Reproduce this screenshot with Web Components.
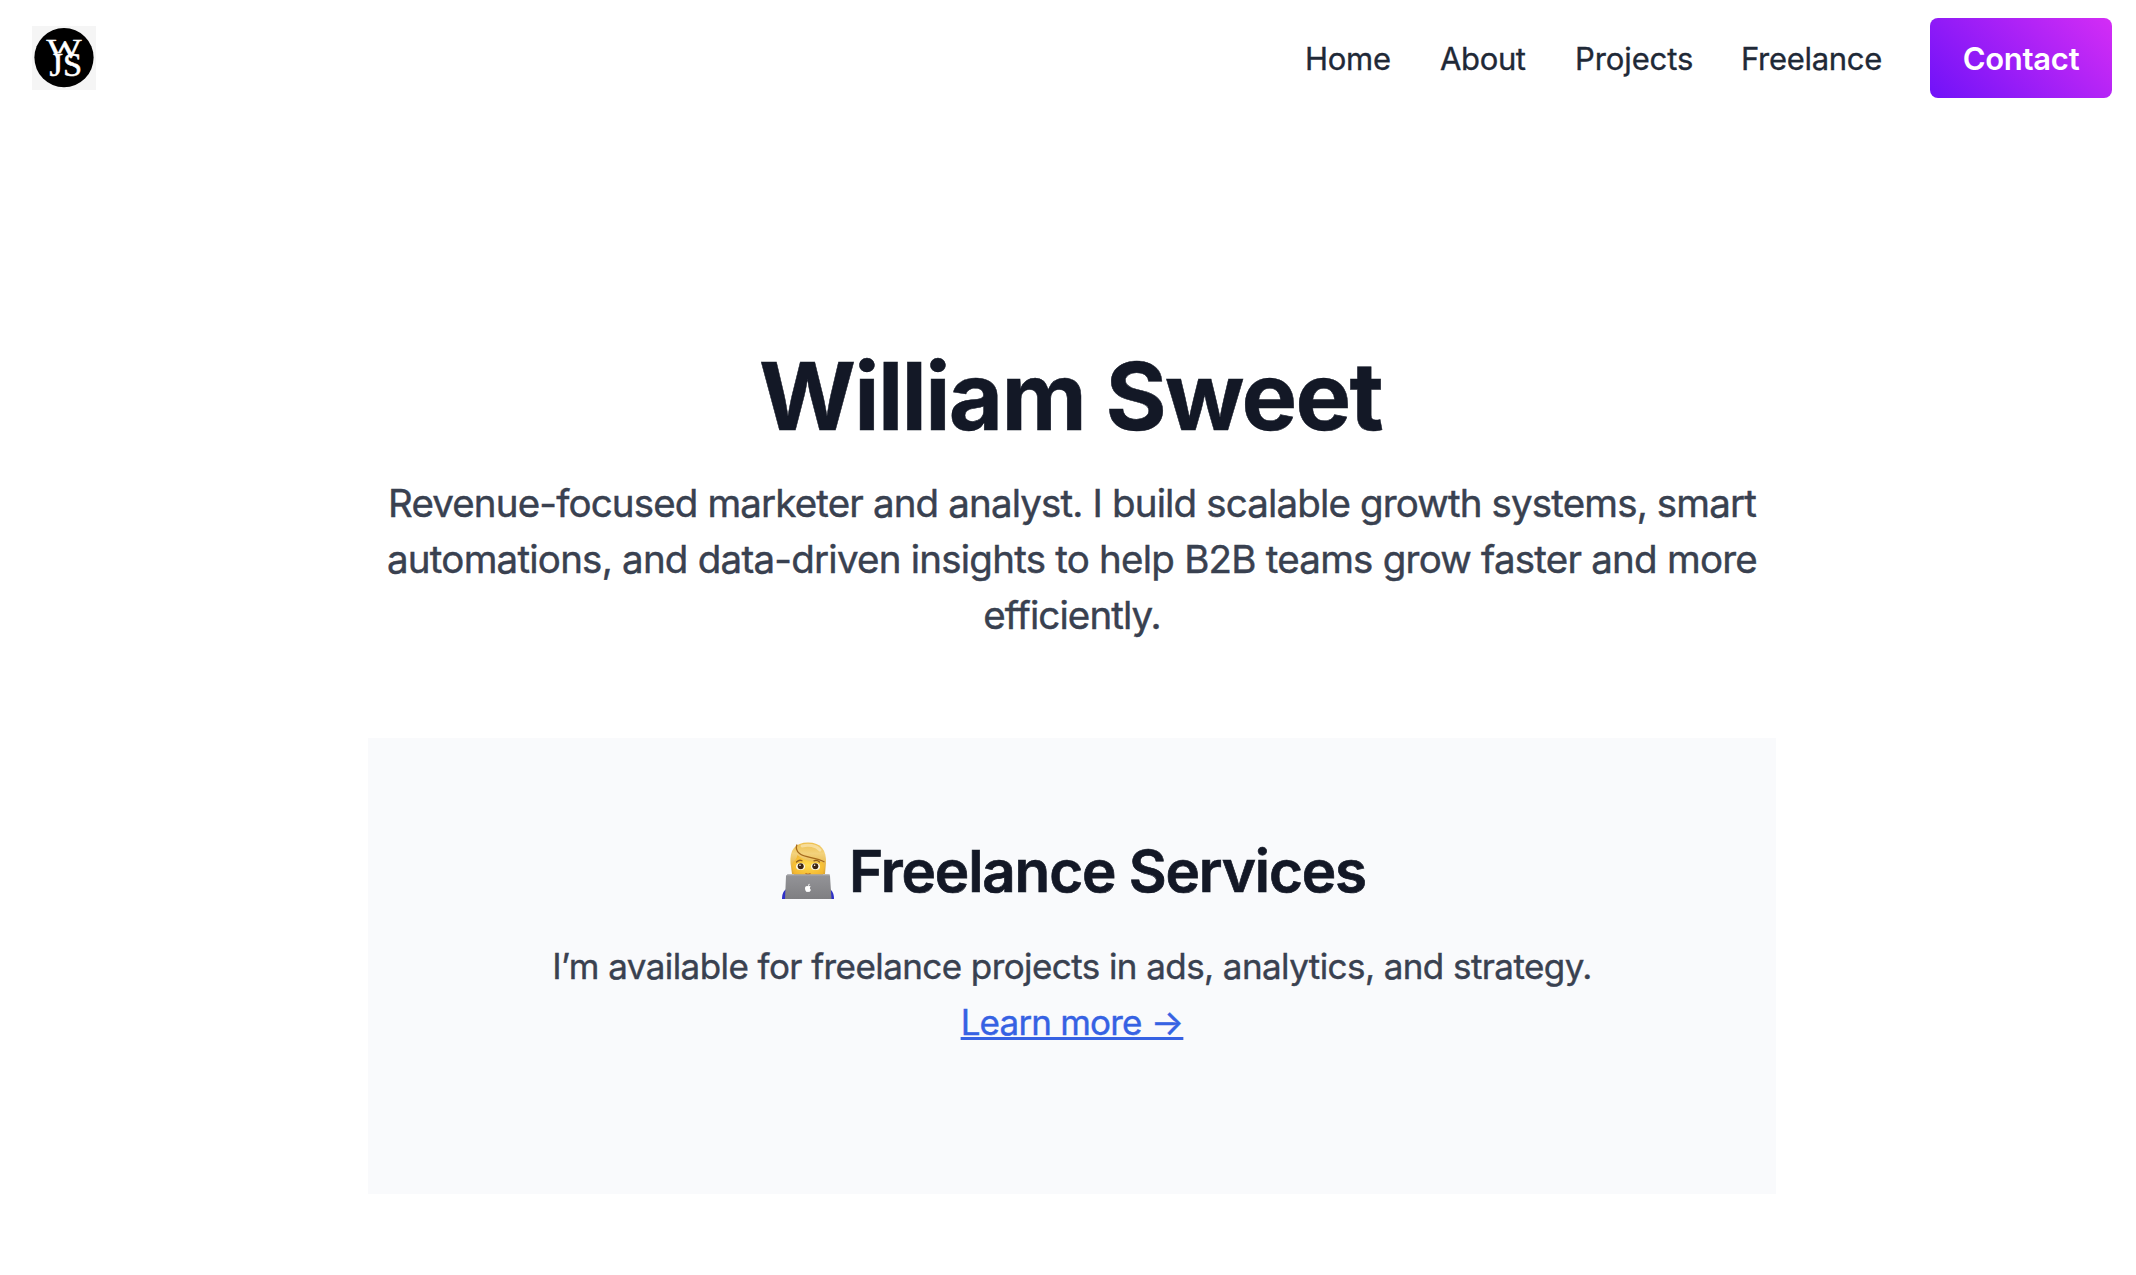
<!DOCTYPE html>
<html lang="en">
<head>
<meta charset="utf-8">
<title>William Sweet</title>
<style>
html{overflow:hidden;background:#fff}
body{margin:0;width:2144px;font-family:Inter,"Liberation Sans",sans-serif;color:#131826}
</style>
</head>
<body>
<site-header>
  <nav-link style="--w:87px;--ls:-.3px">Home</nav-link>
  <nav-link style="--w:87px;--ls:-.36px">About</nav-link>
  <nav-link style="--w:118px;--ls:-.1px">Projects</nav-link>
  <nav-link style="--w:142px;--ls:-.3px">Freelance</nav-link>
  <contact-button>Contact</contact-button>
</site-header>
<hero-intro>
  <span slot="name">William Sweet</span>
  <span style="letter-spacing:-.853px">Revenue-focused marketer and analyst. I build scalable growth systems, smart</span>
  <span style="letter-spacing:-.769px">automations, and data-driven insights to help B2B teams grow faster and more</span>
  <span style="letter-spacing:-.9px">efficiently.</span>
</hero-intro>
<service-card>
  <span slot="title">Freelance Services</span>
  I’m available for freelance projects in ads, analytics, and strategy.
  <span slot="link">Learn more →</span>
</service-card>
<script>
function define(name, html) {
  const t = document.createElement('template');
  t.innerHTML = html;
  customElements.define(name, class extends HTMLElement {
    constructor() {
      super();
      this.attachShadow({mode: 'open'}).append(t.content.cloneNode(true));
    }
  });
}

define('site-logo', `<style>
:host{display:block;width:64px;height:64px}
svg{display:block}
text{font-family:"Liberation Serif",serif;fill:#fff;stroke:#fff;stroke-width:.5px}
</style>
<svg width="64" height="64" viewBox="0 0 64 64">
  <rect width="64" height="64" fill="#f5f5f5"/>
  <circle cx="32" cy="31.600" r="29.600" fill="#000"/>
  <text x="14.500" y="31.500" font-size="28" textLength="35" lengthAdjust="spacingAndGlyphs">W</text>
  <path d="M25.500 27.300h9v8h-9z" fill="#000"/>
  <text x="17.500" y="49.600" font-size="33" textLength="32.500" lengthAdjust="spacingAndGlyphs">JS</text>
</svg>`);

define('nav-link', `<style>
:host{display:block;width:var(--w);font-size:31px;line-height:48px;letter-spacing:var(--ls);color:#1f2937;white-space:nowrap;padding:2px 0 0 1px;box-sizing:border-box;-webkit-text-stroke:.35px currentColor}
a{color:inherit}
</style><a><slot></slot></a>`);

define('contact-button', `<style>
:host{display:flex;align-items:center;justify-content:center;box-sizing:border-box;width:182px;height:80px;border-radius:8px;
 background:linear-gradient(45deg,#7012f8,#d42df5);color:#fff;font-size:31px;font-weight:600;letter-spacing:-.27px}
</style><span><slot></slot></span>`);

define('site-header', `<style>
:host{display:flex;align-items:center;justify-content:space-between;height:116px;padding:0 32px;box-sizing:border-box}
nav{display:flex;align-items:center;gap:48px}
</style><site-logo></site-logo><nav><slot></slot></nav>`);

define('hero-intro', `<style>
:host{display:block;padding:232px 368px 95px;text-align:center}
h1{margin:0 0 31px;padding-right:3px;font-size:93.500px;line-height:96px;font-weight:700;letter-spacing:-1.700px;-webkit-text-stroke:.5px currentColor}
p{margin:0;display:flex;flex-direction:column;align-items:center;font-size:38.500px;line-height:56px;color:#394150;white-space:nowrap;-webkit-text-stroke:.45px currentColor}
</style><h1><slot name="name"></slot></h1><p><slot></slot></p>`);

define('coder-emoji', `<style>:host{display:block;width:56px;height:60px}svg{display:block}</style>
<svg width="56" height="60" viewBox="0 0 56 60">
  <defs>
    <linearGradient id="hair" x1="0" y1="0" x2="0" y2="1"><stop offset="0" stop-color="#eebf4c"/><stop offset=".35" stop-color="#f3d27c"/><stop offset="1" stop-color="#dda52d"/></linearGradient>
    <radialGradient id="skin" cx=".5" cy=".5" r=".6"><stop offset="0" stop-color="#ffdc4f"/><stop offset="1" stop-color="#f3b52e"/></radialGradient>
    <linearGradient id="lid" x1="0" y1="0" x2="0" y2="1"><stop offset="0" stop-color="#949498"/><stop offset="1" stop-color="#7f7f82"/></linearGradient>
  </defs>
  <path d="M2 58c0-6 2-9 6-11h40c4 2 6 5 6 11z" fill="#2e30c8"/>
  <path d="M10.500 22C9.500 9 15 1.500 28 1.500S46.500 9 46 22l-1 11H12z" fill="url(#hair)"/>
  <path d="M13 21c2-1 4-4 4.500-7 6 6 17 7.500 25 7l2 3-1.500 10h-29L12 25z" fill="url(#skin)"/>
  <path d="M17 3.500c-1.500 3.500-.5 6.500 2.500 9 6 5 16 3 25 8.500" fill="none" stroke="#a5691c" stroke-width="1.300"/>
  <path d="M22 5c6-1.500 14-1 18 4" fill="none" stroke="#fbecc4" stroke-width="3" stroke-linecap="round" opacity=".6"/>
  <path d="M16.500 21c1.500-1.500 4-2 5.500-1.200M34 19.800c2-.8 4-.3 5.500 1.200" fill="none" stroke="#93601a" stroke-width="1.300" stroke-linecap="round"/>
  <ellipse cx="20.500" cy="25.500" rx="4.500" ry="3.500" fill="#fffbe9"/><ellipse cx="35.500" cy="25.500" rx="4.500" ry="3.500" fill="#fffbe9"/>
  <circle cx="20.700" cy="25.300" r="3" fill="#3b2412"/><circle cx="35.300" cy="25.300" r="3" fill="#3b2412"/>
  <circle cx="20" cy="24.300" r=".8" fill="#fff"/><circle cx="34.600" cy="24.300" r=".8" fill="#fff"/>
  <path d="M25.500 32.500c1.500 1 3.500 1 5 0" fill="none" stroke="#b0641c" stroke-width="1.200"/>
  <path d="M8 33.500h40.500q1.500 0 1.500 1.500l1.500 23H5l1-23q.2-1.500 2-1.500z" fill="url(#lid)"/>
  <path d="M7 34h43" stroke="#a9a9ad" stroke-width="1"/>
  <path d="M28 45.200c-1-.7-3-.3-3 2.200 0 2 1.300 3.800 2.300 3.600.5-.2.900-.2 1.400 0 1 .2 2-1.100 2.200-2.200-1.300-.7-1.300-2.400-.1-3.200-.8-.9-2-.8-2.800-.4z" fill="#fff"/>
  <path d="M28 44.800c0-1.200.7-1.900 1.700-2.100 0 1.200-.7 2-1.700 2.100z" fill="#fff"/>
</svg>`);

define('service-card', `<style>
:host{display:flex;flex-direction:column;align-items:center;box-sizing:border-box;width:1408px;height:456px;margin:0 auto;padding-top:97px;background:#f9fafc;
 font-size:35px;line-height:56px;letter-spacing:-.575px;color:#394150;white-space:nowrap;-webkit-text-stroke:.4px currentColor}
h2{display:flex;align-items:center;gap:13px;margin:0 0 31px;padding-left:2px;font-size:58.300px;line-height:72px;font-weight:600;letter-spacing:-1.153px;color:#131826;-webkit-text-stroke:.7px currentColor}
p{margin:0}
a{color:#3662e3;letter-spacing:-.8px;text-decoration:underline;text-decoration-thickness:3px;text-underline-offset:2px}
</style><h2><coder-emoji></coder-emoji><slot name="title"></slot></h2><p><slot></slot></p><a><slot name="link"></slot></a>`);
</script>
</body>
</html>
